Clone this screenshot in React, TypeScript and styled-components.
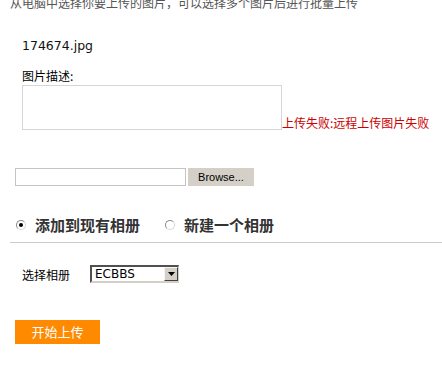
import React from "react";
import styled, { createGlobalStyle } from "styled-components";

const Global = createGlobalStyle`
  html, body { margin: 0; padding: 0; background: #fff; }
  body { font-family: "Noto Sans CJK SC", "DejaVu Sans", sans-serif; font-size: 12px; color: #000; overflow: hidden; }
  * { box-sizing: border-box; }
`;

const Page = styled.div`
  display: flex;
  flex-direction: column;
  margin-top: -6px;
  width: 442px;
`;

const Intro = styled.div`
  padding-left: 10px;
  height: 18px;
  line-height: 18px;
  color: #555;
  font-size: 12px;
  white-space: nowrap;
`;

const FileName = styled.div`
  margin-top: 25px;
  padding-left: 22px;
  height: 18px;
  line-height: 18px;
  font-family: "DejaVu Sans", sans-serif;
  font-size: 12.5px;
  color: #111;
`;

const Label = styled.div`
  margin-top: 12px;
  padding-left: 22px;
  height: 18px;
  line-height: 18px;
  font-size: 12px;
`;

const DescRow = styled.div`
  display: flex;
  align-items: flex-end;
  padding-left: 22px;
`;

const Desc = styled.textarea`
  width: 260px;
  height: 45px;
  border: 1px solid #d6d6d6;
  resize: none;
  margin: 0;
  padding: 2px;
  outline: none;
`;

const ErrorText = styled.span`
  color: #cc0000;
  font-size: 12px;
  line-height: 14px;
  white-space: nowrap;
`;

const FileRow = styled.div`
  display: flex;
  gap: 2px;
  margin-top: 38px;
  padding-left: 15px;
`;

const FileBox = styled.div`
  width: 171px;
  height: 18px;
  border: 1px solid #c4c4c4;
  background: #fff;
`;

const BrowseButton = styled.div`
  width: 66px;
  height: 18px;
  background: #d4d0c8;
  font-family: "Liberation Sans", sans-serif;
  font-size: 11px;
  line-height: 18px;
  text-align: center;
  color: #000;
`;

const RadioRow = styled.div`
  display: flex;
  align-items: center;
  margin-top: 29px;
  padding-left: 16px;
  height: 20px;
`;

const RadioOption = styled.div`
  display: flex;
  align-items: center;
  gap: 9px;
  margin-right: 25px;
`;

const Radio = styled.span<{ $checked?: boolean }>`
  position: relative;
  display: inline-block;
  width: 10px;
  height: 10px;
  border-radius: 50%;
  border: 1px solid #8a8a8a;
  border-right-color: #d8d8d8;
  border-bottom-color: #d8d8d8;
  background: #fff;
  &::after {
    content: "";
    display: ${(p) => (p.$checked ? "block" : "none")};
    position: absolute;
    left: 2px;
    top: 2px;
    width: 4px;
    height: 4px;
    border-radius: 50%;
    background: #000;
  }
`;

const RadioText = styled.span`
  font-size: 15px;
  font-weight: bold;
  color: #333;
  line-height: 20px;
`;

const Divider = styled.div`
  margin-top: 7px;
  margin-left: 10px;
  height: 1px;
  background: #cccccc;
`;

const AlbumRow = styled.div`
  display: flex;
  align-items: center;
  gap: 20px;
  margin-top: 22px;
  padding-left: 22px;
  height: 18px;
`;

const AlbumLabel = styled.span`
  font-size: 12px;
`;

const SelectBox = styled.div`
  display: flex;
  align-items: center;
  justify-content: space-between;
  width: 89px;
  height: 18px;
  border-top: 2px solid #505050;
  border-left: 2px solid #505050;
  border-right: 1px solid #d4d0c8;
  border-bottom: 2px solid #d4d0c8;
  background: #fff;
  font-family: "DejaVu Sans", sans-serif;
  font-size: 12px;
  padding-left: 3px;
`;

const ArrowButton = styled.span`
  display: flex;
  align-items: center;
  justify-content: center;
  width: 14px;
  height: 14px;
  background: #d4d0c8;
  border-top: 1px solid #f4f4f4;
  border-left: 1px solid #f4f4f4;
  border-right: 1px solid #404040;
  border-bottom: 1px solid #404040;
`;

const StartButton = styled.div`
  margin-top: 37px;
  margin-left: 15px;
  width: 85px;
  height: 24px;
  background: #ff8a00;
  color: #fff;
  font-size: 13px;
  line-height: 24px;
  text-align: center;
`;

export default function App() {
  return (
    <>
      <Global />
      <Page>
        <Intro>从电脑中选择你要上传的图片，可以选择多个图片后进行批量上传</Intro>
        <FileName>174674.jpg</FileName>
        <Label>图片描述:</Label>
        <DescRow>
          <Desc />
          <ErrorText>上传失败:远程上传图片失败</ErrorText>
        </DescRow>
        <FileRow>
          <FileBox />
          <BrowseButton>Browse...</BrowseButton>
        </FileRow>
        <RadioRow>
          <RadioOption>
            <Radio $checked />
            <RadioText>添加到现有相册</RadioText>
          </RadioOption>
          <RadioOption>
            <Radio />
            <RadioText>新建一个相册</RadioText>
          </RadioOption>
        </RadioRow>
        <Divider />
        <AlbumRow>
          <AlbumLabel>选择相册</AlbumLabel>
          <SelectBox>
            <span>ECBBS</span>
            <ArrowButton>
              <svg width="7" height="4" viewBox="0 0 7 4">
                <path d="M0 0H7L3.5 4Z" fill="#000" />
              </svg>
            </ArrowButton>
          </SelectBox>
        </AlbumRow>
        <StartButton>开始上传</StartButton>
      </Page>
    </>
  );
}
